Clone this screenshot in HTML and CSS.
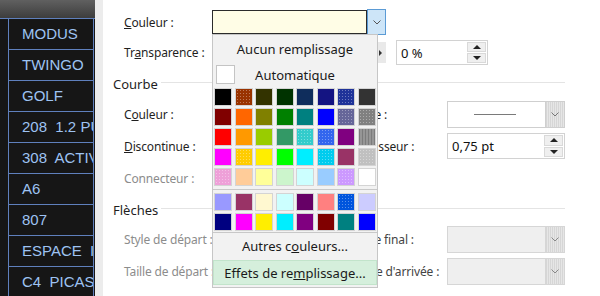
FILE: index.html
```html
<!DOCTYPE html>
<html lang="fr">
<head>
    <meta charset="UTF-8">
    <meta name="viewport" content="width=device-width, initial-scale=1.0">
    <title>Format de la forme</title>
    <link rel="stylesheet" href="styles.css">
</head>
<body>

<div class="screen">

    <!-- Feuille de calcul derrière la boîte de dialogue -->
    <aside class="sheet">
        <div class="sheet-head"></div>
        <div class="cell">MODUS</div>
        <div class="cell">TWINGO</div>
        <div class="cell">GOLF</div>
        <div class="cell">208  1.2 PURETECH</div>
        <div class="cell">308  ACTIVE</div>
        <div class="cell">A6</div>
        <div class="cell">807</div>
        <div class="cell">ESPACE  IV</div>
        <div class="cell">C4  PICASSO</div>
    </aside>

    <div class="gutter"></div>

    <main class="dialog">

        <!-- Remplissage -->
        <div class="field-row">
            <label class="lbl"><u>C</u>ouleur :</label>
            <div class="combo combo-fill">
                <span class="combo-value"></span>
                <span class="combo-btn combo-btn-open">
                    <svg width="8" height="5" viewBox="0 0 8 5"><polyline points="0.5,0.5 4,4 7.5,0.5" fill="none" stroke="#555" stroke-width="1"/></svg>
                </span>
            </div>
        </div>

        <div class="field-row second">
            <label class="lbl">Tr<u>a</u>nsparence :</label>
            <div class="slider">
                <span class="slider-track"></span>
                <span class="slider-end"></span>
            </div>
            <div class="spin spin-small">
                <span class="spin-value">0 %</span>
                <span class="spin-btns"><i class="up"></i><i class="down"></i></span>
            </div>
        </div>

        <!-- Courbe -->
        <div class="group">Courbe</div>
        <div class="grid">
            <label class="lbl">C<u>o</u>uleur :</label>
            <div></div>
            <div></div>
            <label class="lbl">Style :</label>
            <div class="combo combo-line">
                <span class="combo-value"><span class="dash"></span></span>
                <span class="combo-btn">
                    <svg width="8" height="5" viewBox="0 0 8 5"><polyline points="0.5,0.5 4,4 7.5,0.5" fill="none" stroke="#777" stroke-width="1"/></svg>
                </span>
            </div>

            <label class="lbl"><u>D</u>iscontinue :</label>
            <div></div>
            <div></div>
            <label class="lbl">Épaisseur :</label>
            <div class="spin">
                <span class="spin-value">0,75 pt</span>
                <span class="spin-btns"><i class="up"></i><i class="down"></i></span>
            </div>

            <label class="lbl muted">Connecteur :</label>
        </div>

        <!-- Flèches -->
        <div class="group group-arrows">Flèches</div>
        <div class="grid grid-arrows">
            <label class="lbl muted">Style de départ :</label>
            <div></div>
            <div></div>
            <label class="lbl soft">Style final :</label>
            <div class="combo combo-off">
                <span class="combo-value"></span>
                <span class="combo-btn">
                    <svg width="8" height="5" viewBox="0 0 8 5"><polyline points="0.5,0.5 4,4 7.5,0.5" fill="none" stroke="#888" stroke-width="1"/></svg>
                </span>
            </div>

            <label class="lbl muted">Taille de départ :</label>
            <div></div>
            <div></div>
            <label class="lbl soft">Taille d'arrivée :</label>
            <div class="combo combo-off">
                <span class="combo-value"></span>
                <span class="combo-btn">
                    <svg width="8" height="5" viewBox="0 0 8 5"><polyline points="0.5,0.5 4,4 7.5,0.5" fill="none" stroke="#888" stroke-width="1"/></svg>
                </span>
            </div>
        </div>

        <!-- Palette ouverte -->
        <div class="pop">
            <div class="pop-item">Aucun remplissage</div>
            <div class="pop-item pop-auto"><span class="auto-box"></span>Automatique</div>

            <div class="swatches">
                <span class="sw" style="background-color:#000000"></span>
                <span class="sw dots" style="background-color:#993300"></span>
                <span class="sw" style="background-color:#333300"></span>
                <span class="sw" style="background-color:#003300"></span>
                <span class="sw" style="background-color:#0f2d5c"></span>
                <span class="sw" style="background-color:#141482"></span>
                <span class="sw dots" style="background-color:#1f3399"></span>
                <span class="sw" style="background-color:#333333"></span>

                <span class="sw" style="background-color:#800000"></span>
                <span class="sw" style="background-color:#ff6600"></span>
                <span class="sw" style="background-color:#808000"></span>
                <span class="sw" style="background-color:#008000"></span>
                <span class="sw" style="background-color:#008080"></span>
                <span class="sw" style="background-color:#0000ff"></span>
                <span class="sw dots" style="background-color:#666699"></span>
                <span class="sw dots" style="background-color:#808080"></span>

                <span class="sw" style="background-color:#ff0000"></span>
                <span class="sw" style="background-color:#ff9900"></span>
                <span class="sw" style="background-color:#99cc00"></span>
                <span class="sw" style="background-color:#339966"></span>
                <span class="sw dots" style="background-color:#33cccc"></span>
                <span class="sw dots" style="background-color:#3366ee"></span>
                <span class="sw" style="background-color:#800080"></span>
                <span class="sw stripes" style="background-color:#969696"></span>

                <span class="sw" style="background-color:#ff00ff"></span>
                <span class="sw dots" style="background-color:#ffcc00"></span>
                <span class="sw" style="background-color:#ffee00"></span>
                <span class="sw" style="background-color:#00ff00"></span>
                <span class="sw" style="background-color:#00eeff"></span>
                <span class="sw dots" style="background-color:#00ccee"></span>
                <span class="sw" style="background-color:#993366"></span>
                <span class="sw dots" style="background-color:#c0c0c0"></span>

                <span class="sw dots" style="background-color:#eea0d8"></span>
                <span class="sw" style="background-color:#ffcc99"></span>
                <span class="sw" style="background-color:#ffff99"></span>
                <span class="sw" style="background-color:#ccf5cc"></span>
                <span class="sw" style="background-color:#ccffff"></span>
                <span class="sw" style="background-color:#99ccff"></span>
                <span class="sw dots" style="background-color:#cc99ff"></span>
                <span class="sw" style="background-color:#ffffff"></span>
            </div>

            <div class="pop-sep"></div>

            <div class="swatches">
                <span class="sw" style="background-color:#9999ff"></span>
                <span class="sw" style="background-color:#993366"></span>
                <span class="sw" style="background-color:#fff8d0"></span>
                <span class="sw" style="background-color:#ccffff"></span>
                <span class="sw" style="background-color:#660066"></span>
                <span class="sw" style="background-color:#ff8080"></span>
                <span class="sw dots" style="background-color:#0055dd"></span>
                <span class="sw" style="background-color:#ccccff"></span>

                <span class="sw" style="background-color:#000080"></span>
                <span class="sw" style="background-color:#ff00ff"></span>
                <span class="sw" style="background-color:#ffee00"></span>
                <span class="sw" style="background-color:#00eeff"></span>
                <span class="sw" style="background-color:#800080"></span>
                <span class="sw" style="background-color:#800000"></span>
                <span class="sw" style="background-color:#008080"></span>
                <span class="sw" style="background-color:#0000ff"></span>
            </div>

            <div class="pop-sep pop-sep-low"></div>

            <div class="pop-item pop-more">Autres c<u>o</u>uleurs...</div>
            <div class="pop-item pop-hot">Effets de re<u>m</u>plissage...</div>
        </div>

    </main>
</div>

</body>
</html>
```

FILE: styles.css
```css
* {
    margin: 0;
    padding: 0;
    box-sizing: border-box;
}

body {
    width: 600px;
    height: 296px;
    overflow: hidden;
    font-family: 'Noto Sans', sans-serif;
    font-size: 12px;
    color: #1f1f1f;
    background: #fff;
}

.screen {
    display: flex;
    height: 296px;
}

/* Spreadsheet strip on the left */
.sheet {
    width: 95px;
    flex-shrink: 0;
    background: #161616;
    padding: 0 1px 0 8px;
    overflow: hidden;
}

.sheet-head {
    height: 19px;
    margin: 0 -1px 0 -8px;
    background: linear-gradient(#606060, #3d3d3d);
    border-bottom: 1px solid #5f80bd;
}

.cell {
    height: 31px;
    border-left: 1px solid #5f80bd;
    border-right: 1px solid #5f80bd;
    border-bottom: 1px solid #5f80bd;
    padding-left: 13px;
    line-height: 30px;
    font-family: 'Liberation Sans', Arial, sans-serif;
    font-size: 15px;
    color: #9ec3f2;
    white-space: pre;
    overflow: hidden;
}

.gutter {
    width: 8px;
    flex-shrink: 0;
    background: #ececec;
}

/* Dialog */
.dialog {
    flex: 1;
    position: relative;
    padding: 10px 35px 0 21px;
}

.field-row {
    display: flex;
    align-items: center;
    height: 24px;
}

.field-row.second {
    margin-top: 6px;
    height: 25px;
}

.lbl {
    width: 88px;
    white-space: nowrap;
    letter-spacing: -0.15px;
}

.lbl.muted {
    color: #8c8c8c;
}

.lbl.soft {
    color: #444;
}

.combo {
    display: flex;
    height: 27px;
}

.combo-value {
    flex: 1;
    display: flex;
    align-items: center;
    justify-content: center;
    background: #fff;
    border: 1px solid #cfcfcf;
    border-right: none;
}

.combo-btn {
    width: 20px;
    display: flex;
    align-items: center;
    justify-content: center;
    border: 1px solid #cfcfcf;
    background: #e6e6e6 repeating-linear-gradient(90deg, #d6d6d6 0 1px, transparent 1px 2px);
}

.combo-fill {
    width: 174px;
    height: 24px;
}

.combo-fill .combo-value {
    background: #fffde6;
    border: 1px solid #2b2b2b;
}

.combo-btn-open {
    width: 19px;
    height: 26px;
    margin-top: -1px;
    background: #cde5f8;
    border: 1px solid #5b9bd5;
}

.combo-line .dash {
    width: 42px;
    height: 1px;
    margin-right: 3px;
    background: #7a7a7a;
}

.combo-off .combo-value {
    background: #efefef;
    border-color: #d6d6d6;
}

.combo-off .combo-btn {
    border-color: #d6d6d6;
}

.slider {
    width: 174px;
    height: 21px;
    display: flex;
}

.slider-track {
    flex: 1;
}

.slider-end {
    width: 10px;
    background: #e9e9e9;
    position: relative;
}

.slider-end::after {
    content: "";
    position: absolute;
    left: 3px;
    top: 8px;
    border-left: 3px solid #333;
    border-top: 3px solid transparent;
    border-bottom: 3px solid transparent;
}

.spin {
    display: flex;
    height: 26px;
    background: #fff;
    border: 1px solid #d2d2d2;
}

.spin-small {
    width: 92px;
    height: 25px;
    margin-left: 10px;
}

.spin-value {
    flex: 1;
    padding-left: 4px;
    font-size: 13px;
    color: #111;
    display: flex;
    align-items: center;
}

.spin-btns {
    width: 21px;
    display: flex;
    flex-direction: column;
    gap: 1px;
    padding: 1px;
}

.spin-btns i {
    flex: 1;
    position: relative;
    background: #efefef;
    border: 1px solid #d9d9d9;
}

.spin-btns i::after {
    content: "";
    position: absolute;
    left: 50%;
    top: 50%;
    margin: -2px 0 0 -4px;
    border-left: 4px solid transparent;
    border-right: 4px solid transparent;
}

.spin-btns .up::after {
    border-bottom: 4px solid #222;
}

.spin-btns .down::after {
    border-top: 4px solid #222;
}

/* Section headings */
.group {
    display: flex;
    align-items: center;
    gap: 3px;
    height: 18px;
    margin: 10px 0 0 -11px;
    font-size: 13px;
}

.group::after {
    content: "";
    flex: 1;
    height: 1px;
    margin-top: -3px;
    background: #e4e4e4;
}

.group-arrows {
    margin-top: 10px;
}

.grid {
    display: grid;
    grid-template-columns: 88px 130px 13px 92px 118px;
    grid-auto-rows: 26px;
    row-gap: 6px;
    align-items: center;
    margin-top: 8px;
}

.grid-arrows {
    grid-auto-rows: 27px;
    row-gap: 5px;
    margin-top: 7px;
}

/* Colour palette drop-down */
.pop {
    position: absolute;
    left: 109px;
    top: 34px;
    width: 166px;
    height: 254px;
    background: #f2f2f2;
    border: 1px solid #c6c6c6;
    font-size: 13px;
    color: #1a1a1a;
}

.pop-item {
    height: 27px;
    display: flex;
    align-items: center;
    justify-content: center;
}

.pop-auto {
    height: 25px;
    position: relative;
}

.auto-box {
    position: absolute;
    left: 3px;
    top: 3px;
    width: 19px;
    height: 19px;
    background: #fff;
    border: 1px solid #c4c4c4;
}

.swatches {
    display: grid;
    grid-template-columns: repeat(8, 16px);
    grid-auto-rows: 16px;
    column-gap: 4.5px;
    row-gap: 4px;
    padding-left: 2px;
    margin-top: 2px;
}

.sw {
    box-shadow: 0 0 0 1px #d4d4d4;
}

.sw.dots {
    background-image: radial-gradient(rgba(255, 255, 255, 0.35) 0.7px, transparent 0.9px);
    background-size: 3px 3px;
}

.sw.stripes {
    background-image: repeating-linear-gradient(90deg, #7c7c7c 0 1px, transparent 1px 3px);
}

.pop-sep {
    height: 1px;
    margin: 4px 0;
    background: #c8c8c8;
}

.pop-sep-low {
    margin: 2px 0 0;
}

.pop-more {
    height: 25px;
}

.pop-hot {
    height: 25px;
    margin: 2px 0 0;
    background: #d5efdc;
    border: 1px solid #c2e4cb;
}
```
